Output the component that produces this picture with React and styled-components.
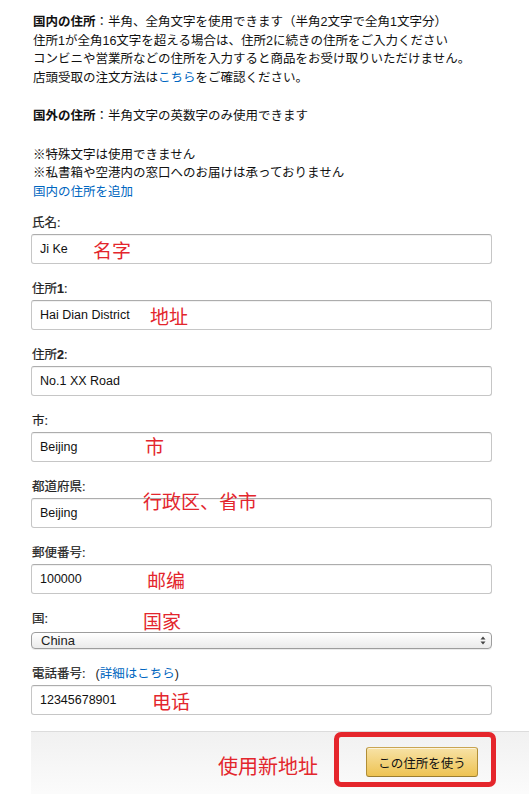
import styled, { createGlobalStyle } from 'styled-components';

const GlobalStyle = createGlobalStyle`
  html, body { margin: 0; padding: 0; background: #fff; }
  body {
    font-family: "Liberation Sans", "Noto Sans CJK JP", sans-serif;
    color: #111;
  }
`;

const Page = styled.div`
  width: 529px;
  min-height: 794px;
  box-sizing: border-box;
  padding: 13px 37px 0 31px;
  display: flex;
  flex-direction: column;
  font-size: 12.5px;
  overflow: hidden;
`;

const Notes = styled.div`
  padding-left: 2px;
  line-height: 18.5px;
  margin-bottom: 13px;
`;

const Para = styled.p`
  margin: 0 0 20px;
  &:last-child { margin-bottom: 0; }
`;

const Strong = styled.b`
  font-weight: 700;
`;

const Link = styled.a`
  color: #0066c0;
  text-decoration: none;
  cursor: pointer;
`;

const Field = styled.div`
  margin-bottom: 16px;
`;

const Label = styled.div`
  position: relative;
  height: 18px;
  line-height: 18px;
  margin-bottom: ${(p) => p.$gap || 2}px;
  padding-left: 1px;
  font-weight: 400;
  color: #222;
  -webkit-text-stroke: 0.2px #222;
`;

const Num = styled.b`
  font-weight: 700;
`;

const Hint = styled.span`
  margin-left: 10px;
  -webkit-text-stroke: 0;
`;

const InputWrap = styled.div`
  position: relative;
`;

const TextInput = styled.input`
  display: block;
  width: 100%;
  height: 30px;
  box-sizing: border-box;
  padding: 0 8px;
  border: 1px solid #c6c6c6;
  border-top-color: #adadad;
  border-radius: 3px;
  box-shadow: inset 0 1px 0 rgba(0, 0, 0, 0.05);
  font: 12.5px "Liberation Sans", "Noto Sans CJK JP", sans-serif;
  color: #111;
  background: #fff;
  outline: none;
`;

const Note = styled.span`
  position: absolute;
  left: ${(p) => p.$x}px;
  top: 50%;
  transform: translateY(calc(-50% + ${(p) => p.$dy || 0}px));
  font-family: "Noto Sans CJK SC", sans-serif;
  font-size: 19px;
  font-weight: 400;
  line-height: 1;
  color: #e3262d;
  -webkit-text-stroke: 0;
  white-space: nowrap;
  pointer-events: none;
`;

const SelectBox = styled.div`
  height: 17px;
  box-sizing: border-box;
  display: flex;
  align-items: center;
  justify-content: space-between;
  padding: 0 5px 0 9px;
  border: 1px solid #9d9d9d;
  border-radius: 4px;
  background: linear-gradient(to bottom, #ffffff, #ebebeb);
  box-shadow: 0 1px 0 rgba(0, 0, 0, 0.08);
  font-size: 13px;
  color: #222;
`;

const Footer = styled.div`
  flex: 1;
  margin-right: -37px;
  border-top: 1px solid #dcdcdc;
  background: linear-gradient(to bottom, #f1f1f1, #fcfcfc);
  display: flex;
  justify-content: flex-end;
  align-items: flex-start;
  padding: 15px 51px 17px 0;
`;

const Callout = styled.span`
  font-family: "Noto Sans CJK SC", sans-serif;
  font-size: 20px;
  line-height: 30px;
  color: #e3262d;
  margin: 4px 48px 0 0;
`;

const ButtonWrap = styled.div`
  position: relative;
`;

const RedFrame = styled.div`
  position: absolute;
  top: -15px;
  left: -32px;
  right: -18px;
  bottom: -10px;
  border: 5px solid #e5262c;
  border-radius: 7px;
  pointer-events: none;
`;

const UseButton = styled.button`
  display: block;
  width: 112px;
  height: 30px;
  padding: 0;
  border: 1px solid;
  border-color: #c9a552 #b18e36 #9c7e31;
  border-radius: 3px;
  background: linear-gradient(to bottom, #f7e2a6, #eec352);
  box-shadow: inset 0 1px 0 rgba(255, 255, 255, 0.6);
  font: 12.5px "Liberation Sans", "Noto Sans CJK JP", sans-serif;
  color: #111;
  cursor: pointer;
`;

const fields = [
  { label: '氏名', value: 'Ji Ke', note: '名字', x: 62 },
  { label: '住所', num: '1', value: 'Hai Dian District', note: '地址', x: 119 },
  { label: '住所', num: '2', value: 'No.1 XX Road' },
  { label: '市', value: 'Beijing', note: '市', x: 114, dy: -2 },
  { label: '都道府県', value: 'Beijing', note: '行政区、省市', x: 112, dy: -13 },
  { label: '郵便番号', value: '100000', note: '邮编', x: 116 },
];

function Arrows() {
  return (
    <svg width="6" height="9" viewBox="0 0 6 9">
      <path d="M3 0.5 L5.5 3.5 H0.5Z M3 8.5 L0.5 5.5 H5.5Z" fill="#444" />
    </svg>
  );
}

export default function App() {
  return (
    <>
      <GlobalStyle />
      <Page>
        <Notes>
          <Para>
            <Strong>国内の住所</Strong>：半角、全角文字を使用できます（半角2文字で全角1文字分）<br />
            住所1が全角16文字を超える場合は、住所2に続きの住所をご入力ください<br />
            コンビニや営業所などの住所を入力すると商品をお受け取りいただけません。<br />
            店頭受取の注文方法は<Link>こちら</Link>をご確認ください。
          </Para>
          <Para>
            <Strong>国外の住所</Strong>：半角文字の英数字のみ使用できます
          </Para>
          <Para>
            ※特殊文字は使用できません<br />
            ※私書箱や空港内の窓口へのお届けは承っておりません<br />
            <Link>国内の住所を追加</Link>
          </Para>
        </Notes>

        {fields.map((f) => (
          <Field key={f.label + (f.num || '')}>
            <Label>
              {f.label}
              {f.num && <Num>{f.num}</Num>}:
            </Label>
            <InputWrap>
              <TextInput readOnly value={f.value} />
              {f.note && <Note $x={f.x} $dy={f.dy}>{f.note}</Note>}
            </InputWrap>
          </Field>
        ))}

        <Field>
          <Label $gap={4}>
            国:
            <Note $x={112} $dy={1}>国家</Note>
          </Label>
          <SelectBox>
            <span>China</span>
            <Arrows />
          </SelectBox>
        </Field>

        <Field>
          <Label>
            電話番号:
            <Hint>(<Link>詳細はこちら</Link>)</Hint>
          </Label>
          <InputWrap>
            <TextInput readOnly value="12345678901" />
            <Note $x={121}>电话</Note>
          </InputWrap>
        </Field>

        <Footer>
          <Callout>使用新地址</Callout>
          <ButtonWrap>
            <RedFrame />
            <UseButton>この住所を使う</UseButton>
          </ButtonWrap>
        </Footer>
      </Page>
    </>
  );
}
